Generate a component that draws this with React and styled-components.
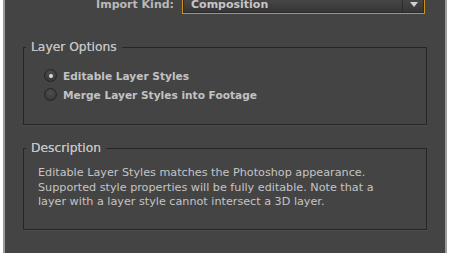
import React from "react";
import styled, { createGlobalStyle } from "styled-components";

const Global = createGlobalStyle`
  html, body { margin: 0; padding: 0; background: #ffffff; }
  body { font-family: "DejaVu Sans", "Liberation Sans", sans-serif; }
`;

const Frame = styled.div`
  width: 450px;
  height: 253px;
  overflow: hidden;
  padding: 0 3px;
  box-sizing: border-box;
  background: #ffffff;
`;

const Panel = styled.div`
  height: 100%;
  box-sizing: border-box;
  background: #444444;
  border-left: 2px solid #9c9c9c;
  border-right: 2px solid #9c9c9c;
  display: flex;
  flex-direction: column;
  padding: 0 18px;
`;

const KindRow = styled.div`
  display: flex;
  align-items: center;
  gap: 8px;
  margin-top: -6px;
  padding-left: 68px;
  padding-right: 2px;
`;

const Label = styled.span`
  width: 83px;
  text-align: right;
  font-size: 11px;
  font-weight: bold;
  color: #b9b9b9;
  white-space: nowrap;
`;

const Select = styled.div`
  flex: 1;
  height: 20px;
  box-sizing: border-box;
  display: flex;
  align-items: center;
  border: 1px solid #d18f1a;
  box-shadow: inset 0 0 0 1px #2a2a2a;
  background: linear-gradient(#4c4c4c, #353535);
`;

const SelectText = styled.span`
  flex: 1;
  padding-left: 8px;
  font-size: 11px;
  font-weight: bold;
  color: #c6c6c6;
`;

const Arrow = styled.span`
  width: 21px;
  height: 18px;
  border-left: 1px solid #2c2c2c;
  display: flex;
  align-items: center;
  justify-content: center;
`;

const Group = styled.fieldset`
  margin: ${p => p.$top}px 0 0 0;
  padding: 0;
  height: ${p => p.$h}px;
  box-sizing: border-box;
  border: 1px solid #262626;
  box-shadow: 0 1px 0 #4d4d4d;
  min-width: 0;
`;

const Legend = styled.legend`
  margin-left: 2px;
  padding: 0 5px;
  font-size: 12.3px;
  color: #c2c2c2;
  text-shadow: 0 0 0.4px #c2c2c2;
`;

const GroupBody = styled.div`
  padding: ${p => p.$pad};
`;

const RadioRow = styled.label`
  display: flex;
  align-items: center;
  gap: 6px;
  height: 19px;
  font-size: 10.6px;
  font-weight: bold;
  color: #c2c2c2;
`;

const Radio = styled.span`
  width: 11px;
  height: 11px;
  border-radius: 50%;
  border: 1px solid #262626;
  background: radial-gradient(circle at 50% 35%, #4e4e4e, #333333);
  display: flex;
  align-items: center;
  justify-content: center;
  &::after {
    content: "";
    width: 4px;
    height: 4px;
    border-radius: 50%;
    background: ${p => (p.$on ? "#d8d8d8" : "transparent")};
  }
`;

const Desc = styled.p`
  margin: 0;
  font-size: 11.2px;
  line-height: 14.5px;
  color: #c4c4c4;
`;

export default function App() {
  return (
    <Frame>
      <Global />
      <Panel>
        <KindRow>
          <Label>Import Kind:</Label>
          <Select>
            <SelectText>Composition</SelectText>
            <Arrow>
              <svg width="8" height="5" viewBox="0 0 8 5">
                <path d="M0 0 L8 0 L4 5 Z" fill="#d0d0d0" />
              </svg>
            </Arrow>
          </Select>
        </KindRow>
        <Group $top={26} $h={85}>
          <Legend>Layer Options</Legend>
          <GroupBody $pad="12px 0 0 20px">
            <RadioRow>
              <Radio $on />
              Editable Layer Styles
            </RadioRow>
            <RadioRow>
              <Radio />
              Merge Layer Styles into Footage
            </RadioRow>
          </GroupBody>
        </Group>
        <Group $top={16} $h={89}>
          <Legend>Description</Legend>
          <GroupBody $pad="11px 0 0 14px">
            <Desc>
              Editable Layer Styles matches the Photoshop appearance.
              <br />
              Supported style properties will be fully editable. Note that a
              <br />
              layer with a layer style cannot intersect a 3D layer.
            </Desc>
          </GroupBody>
        </Group>
      </Panel>
    </Frame>
  );
}
